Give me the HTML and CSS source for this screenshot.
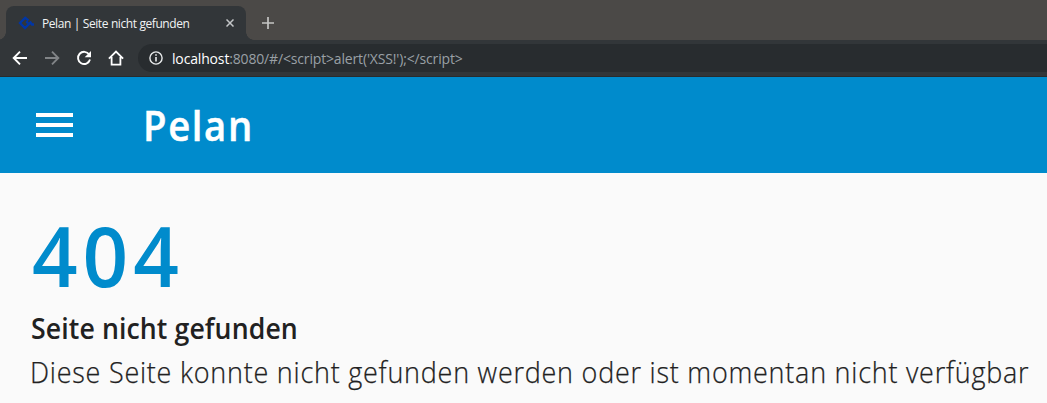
FILE: index.html
```html
<!DOCTYPE html>
<html lang="de">
<head>
<meta charset="utf-8">
<title>Pelan | Seite nicht gefunden</title>
<link rel="stylesheet" href="styles.css">
</head>
<body>
<div class="tabstrip">
  <div class="tab">
    <svg class="favicon" width="16" height="16" viewBox="0 0 16 16"><path d="M10.5 5.3 7.2 2.8 2 8l5 5L12.5 7.5 14 9.5h2M8.3 6.2 10 8.2" fill="none" stroke="#0036a6" stroke-width="2.3"/></svg>
    <span class="tab-title">Pelan | Seite nicht gefunden</span>
    <svg class="tab-close" width="8" height="8" viewBox="0 0 8 8"><path d="M.5.5l7 7M7.5.5l-7 7" stroke="#c3c6c8" stroke-width="1.5"/></svg>
  </div>
  <svg class="new-tab" width="12" height="12" viewBox="0 0 12 12"><path d="M6 0v12M0 6h12" stroke="#c5c5c4" stroke-width="1.7"/></svg>
</div>
<div class="toolbar">
  <svg class="nav" width="16" height="16" viewBox="0 0 16 16"><path d="M15 8H2.5M8 1.7 1.7 8 8 14.3" fill="none" stroke="#fff" stroke-width="1.9"/></svg>
  <svg class="nav" width="16" height="16" viewBox="0 0 16 16"><path d="M1 8h12.5M8 1.7 14.3 8 8 14.3" fill="none" stroke="#818487" stroke-width="1.9"/></svg>
  <svg class="nav" width="16" height="16" viewBox="0 0 16 16"><path d="M13.2 4.5A6.1 6.1 0 1 0 14 9.6" fill="none" stroke="#fff" stroke-width="1.9"/><path d="M15 1v6.3H8.7z" fill="#fff"/></svg>
  <svg class="nav" width="16" height="16" viewBox="0 0 16 16"><path d="M.9 8.6 8 1.5l7.1 7.1M3.6 7v7.7h8.8V7" fill="none" stroke="#fff" stroke-width="1.8"/></svg>
  <div class="omnibox">
    <svg width="14" height="14" viewBox="0 0 14 14"><circle cx="7" cy="7" r="6.1" fill="none" stroke="#e8eaeb" stroke-width="1.4"/><path d="M7 3.2v1.6M7 6v4.6" stroke="#e8eaeb" stroke-width="1.6"/></svg>
    <span class="url"><span class="host">localhost</span>:8080/#/&lt;script&gt;alert('XSS!');&lt;/script&gt;</span>
  </div>
</div>
<header class="appbar">
  <div class="menu"><i></i><i></i><i></i></div>
  <div class="brand">Pelan</div>
</header>
<main class="content">
  <h1 class="code">404</h1>
  <h2 class="heading">Seite nicht gefunden</h2>
  <p class="message">Diese Seite konnte nicht gefunden werden oder ist momentan nicht verfügbar</p>
</main>
</body>
</html>
```
FILE: styles.css
```css
* { box-sizing: border-box; }
body { margin: 0; width: 1047px; height: 403px; overflow: hidden; background: #fafafa; font-family: "Open Sans", sans-serif; }
svg { display: block; flex: none; }
.tabstrip { display: flex; height: 40px; padding: 6px 0 0 6px; background: #4b4947; }
.tab { position: relative; display: flex; align-items: center; width: 240px; height: 34px; padding: 0 12px; background: #323639; border-radius: 8px 8px 0 0; }
.tab::before, .tab::after { content: ""; position: absolute; bottom: 0; width: 8px; height: 8px; }
.tab::before { left: -8px; background: radial-gradient(circle at 0 0, #4b4947 7.5px, #323639 8px); }
.tab::after { right: -8px; background: radial-gradient(circle at 100% 0, #4b4947 7.5px, #323639 8px); }
.tab-title { margin-left: 8px; font-size: 12px; color: #f1f3f4; white-space: nowrap; letter-spacing: -.43px; word-spacing: .2px; }
.tab-close { margin-left: auto; }
.new-tab { margin: 11px 0 0 16px; }
.toolbar { display: flex; align-items: center; height: 37px; padding-left: 12px; gap: 16px; background: #323639; border-bottom: 1px solid #292b2d; }
.omnibox { display: flex; align-items: center; flex: 1; height: 28px; margin-left: -2px; padding-left: 11px; gap: 9px; border-radius: 14px 0 0 14px; background: #282c2f; }
.url { font-size: 14px; color: #9aa0a6; white-space: nowrap; letter-spacing: -.16px; }
.host { color: #fff; }
.appbar { display: flex; align-items: center; height: 96px; padding-left: 36px; background: #008bcc; }
.menu { display: flex; flex-direction: column; width: 36.5px; gap: 6px; }
.menu i { height: 4px; background: #fff; }
.brand { margin-left: 70.5px; font-size: 42px; line-height: 60px; font-weight: 600; color: #fff; letter-spacing: 1.8px; transform: scaleX(.91); transform-origin: left; -webkit-text-stroke: .5px #fff; }
.content { display: flex; flex-direction: column; align-items: flex-start; padding: 37px 0 0 31px; color: #212121; white-space: nowrap; }
.code { margin: 0 0 0 1px; font-size: 84px; line-height: 90px; font-weight: 600; color: #008bcc; letter-spacing: 5.2px; transform: scaleX(.95); transform-origin: left; }
.heading { margin: 8px 0 0 -.5px; font-size: 29px; line-height: 40px; font-weight: 600; letter-spacing: .1px; transform: scaleX(.92); transform-origin: left; }
.message { margin: 4px 0 0 -1px; font-size: 29px; line-height: 40px; font-weight: 300; letter-spacing: .82px; transform: scaleX(.93); transform-origin: left; -webkit-text-stroke: .25px #212121; }
```
